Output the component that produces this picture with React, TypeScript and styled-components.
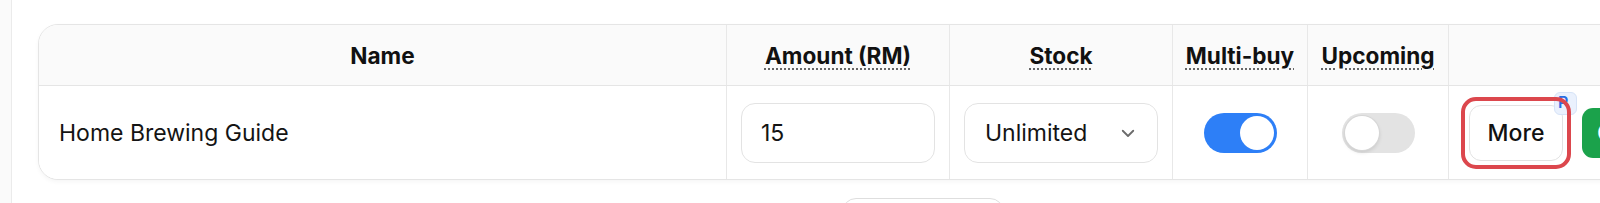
import React, { useState } from 'react'
import styled, { createGlobalStyle } from 'styled-components'

const GlobalStyle = createGlobalStyle`
  html, body {
    margin: 0;
    padding: 0;
    background: #ffffff;
    overflow: hidden;
    font-family: Inter, 'Liberation Sans', sans-serif;
    color: #111111;
  }
  * { box-sizing: border-box; }
`

const COLS = '687px 223px 223px 135px 141px 359px'

const Page = styled.div`
  display: flex;
  height: 100vh;
`

const Sidebar = styled.aside`
  flex: 0 0 12px;
  background: #fafafa;
  border-right: 1px solid #ebebeb;
`

const Main = styled.main`
  flex: 0 0 auto;
  padding: 24px 0 0 26px;
`

const Wrap = styled.div`
  width: 1770px;
  display: flex;
  flex-direction: column;
  gap: 18px;
`

const Card = styled.div`
  border: 1px solid #e5e5e5;
  border-radius: 20px;
  overflow: hidden;
  background: #fff;
  box-shadow: 0 2px 4px rgba(0, 0, 0, 0.04);
`

const Row = styled.div<{ $head?: boolean }>`
  display: grid;
  grid-template-columns: ${COLS};
  height: ${(p) => (p.$head ? '61px' : '93px')};
  background: ${(p) => (p.$head ? '#fafafa' : '#ffffff')};
  border-bottom: ${(p) => (p.$head ? '1px solid #e5e5e5' : 'none')};
`

const Cell = styled.div<{ $align?: 'left' | 'center'; $first?: boolean }>`
  display: flex;
  align-items: center;
  justify-content: ${(p) => (p.$align === 'left' ? 'flex-start' : 'center')};
  padding: ${(p) => (p.$align === 'left' ? '0 20px' : '0 4px')};
  border-left: ${(p) => (p.$first ? 'none' : '1px solid #e8e8e8')};
  font-size: 23px;
  white-space: nowrap;
`

const ActionCell = styled(Cell)`
  justify-content: flex-start;
  padding: 0 0 0 20px;
  gap: 19px;
`

const HeadText = styled.span<{ $hint?: boolean }>`
  font-weight: 700;
  font-size: 22.6px;
  white-space: nowrap;
  text-decoration: ${(p) => (p.$hint ? 'underline dotted #666' : 'none')};
  text-decoration-thickness: 2px;
  text-underline-offset: 5px;
`

const NameText = styled.span`
  font-size: 23px;
  color: #141414;
`

const Input = styled.input`
  width: 194px;
  height: 60px;
  border: 1px solid #e3e3e3;
  border-radius: 14px;
  padding: 0 19px;
  font-family: inherit;
  font-size: 23px;
  color: #141414;
  background: #fff;
  outline: none;
`

const Select = styled.div`
  width: 194px;
  height: 60px;
  border: 1px solid #e3e3e3;
  border-radius: 14px;
  padding: 0 20px;
  display: flex;
  align-items: center;
  justify-content: space-between;
  font-size: 23px;
  color: #141414;
  background: #fff;
`

const Track = styled.button<{ $on: boolean }>`
  width: 73px;
  height: 40px;
  border-radius: 20px;
  border: none;
  padding: 3px;
  display: flex;
  justify-content: ${(p) => (p.$on ? 'flex-end' : 'flex-start')};
  background: ${(p) => (p.$on ? '#2d7ff7' : '#e3e3e3')};
  cursor: pointer;
`

const Knob = styled.span<{ $on: boolean }>`
  width: 34px;
  height: 34px;
  border-radius: 50%;
  background: #fff;
  box-shadow: ${(p) =>
    p.$on ? 'none' : '0 0 0 1px #d6d6d6, 0 2px 4px rgba(0,0,0,0.14)'};
`

const Highlight = styled.div`
  position: relative;
  display: flex;

  &::after {
    content: '';
    position: absolute;
    inset: -8px;
    border: 4px solid #dc474d;
    border-radius: 15px;
    z-index: 2;
    pointer-events: none;
  }
`

const MoreButton = styled.button`
  width: 94px;
  height: 56px;
  border: 1px solid #e2e2e2;
  border-radius: 12px;
  background: #fff;
  font-family: inherit;
  font-size: 23px;
  font-weight: 500;
  color: #111;
  cursor: pointer;
`

const Badge = styled.span`
  position: absolute;
  left: 85px;
  top: -13px;
  width: 23px;
  height: 23px;
  border-radius: 6px;
  background: #eaf1fd;
  border: 1px solid #d6e3f7;
  color: #2a6ee3;
  font-size: 16px;
  font-weight: 600;
  line-height: 18px;
  padding-left: 3px;
  z-index: 1;
`

const GreenButton = styled.button`
  height: 50px;
  padding: 0 15px;
  border: none;
  border-radius: 11px;
  background: #1ba24b;
  color: #fff;
  font-family: inherit;
  font-size: 23px;
  font-weight: 500;
  white-space: nowrap;
`

const Footer = styled.div`
  display: flex;
  justify-content: center;
`

const LoadMore = styled.button`
  width: 162px;
  height: 52px;
  border: 1px solid #dedede;
  border-radius: 14px;
  background: #fff;
  font-family: inherit;
  font-size: 20px;
  color: #111;
`

const Chevron = () => (
  <svg width="18" height="18" viewBox="0 0 24 24" fill="none" stroke="#6b6b6b" strokeWidth="2.4" strokeLinecap="round" strokeLinejoin="round">
    <path d="M5 9l7 7 7-7" />
  </svg>
)

const Toggle = ({ initial }: { initial: boolean }) => {
  const [on, setOn] = useState(initial)
  return (
    <Track $on={on} onClick={() => setOn(!on)} aria-pressed={on}>
      <Knob $on={on} />
    </Track>
  )
}

export default function App() {
  return (
    <>
      <GlobalStyle />
      <Page>
        <Sidebar />
        <Main>
          <Wrap>
            <Card>
              <Row $head>
                <Cell $first>
                  <HeadText>Name</HeadText>
                </Cell>
                <Cell>
                  <HeadText $hint>Amount (RM)</HeadText>
                </Cell>
                <Cell>
                  <HeadText $hint>Stock</HeadText>
                </Cell>
                <Cell>
                  <HeadText $hint>Multi-buy</HeadText>
                </Cell>
                <Cell>
                  <HeadText $hint>Upcoming</HeadText>
                </Cell>
                <Cell />
              </Row>
              <Row>
                <Cell $first $align="left">
                  <NameText>Home Brewing Guide</NameText>
                </Cell>
                <Cell>
                  <Input defaultValue="15" />
                </Cell>
                <Cell>
                  <Select>
                    <span>Unlimited</span>
                    <Chevron />
                  </Select>
                </Cell>
                <Cell>
                  <Toggle initial={true} />
                </Cell>
                <Cell>
                  <Toggle initial={false} />
                </Cell>
                <ActionCell>
                  <Highlight>
                    <MoreButton>More</MoreButton>
                    <Badge>P</Badge>
                  </Highlight>
                  <GreenButton>Copy</GreenButton>
                </ActionCell>
              </Row>
            </Card>
            <Footer>
              <LoadMore>Load more</LoadMore>
            </Footer>
          </Wrap>
        </Main>
      </Page>
    </>
  )
}
